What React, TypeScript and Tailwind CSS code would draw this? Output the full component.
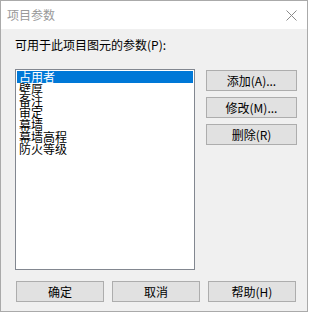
import React from 'react'

const font = { fontFamily: '"Noto Sans CJK SC", "Liberation Sans", sans-serif' }

const Button: React.FC<{ label: string; className?: string }> = ({ label, className }) => (
  <button
    className={`h-[21px] border border-[#adadad] bg-[#e1e1e1] text-[12px] leading-none text-black flex items-center justify-center ${className ?? ''}`}
  >
    {label}
  </button>
)

const App: React.FC = () => {
  const params = ['占用者', '壁厚', '备注', '审定', '幕墙', '幕墙高程', '防火等级']

  return (
    <div className="w-[312px] h-[314px] bg-white" style={font}>
      <div className="w-[308px] h-[312px] border border-[#aaaaaa] bg-[#f0f0f0] flex flex-col">
        <div className="h-[28px] bg-white flex items-center justify-between pl-[6px] pr-[10px]">
          <span className="text-[12px] text-[#999999]">项目参数</span>
          <svg width="11" height="11" viewBox="0 0 11 11">
            <path d="M0.5 0.5 L10.5 10.5 M10.5 0.5 L0.5 10.5" stroke="#8a8a8a" strokeWidth="1" fill="none" />
          </svg>
        </div>

        <div className="flex-1 pl-[14px]">
          <p className="mt-[8px] h-[16px] text-[12px] leading-[16px] text-black">可用于此项目图元的参数(P):</p>

          <div className="flex mt-[16px]">
            <div className="w-[180px] h-[201px] border border-[#828790] bg-white p-[1px]">
              {params.map((p, i) => (
                <div
                  key={p}
                  className={`h-[12px] pl-[2px] text-[12px] leading-[12px] ${i === 0 ? 'bg-[#0078d7] text-white' : 'text-black'}`}
                >
                  {p}
                </div>
              ))}
            </div>
            <div className="ml-[11px] mt-[1px] flex flex-col gap-[6px]">
              <Button label="添加(A)..." className="w-[91px]" />
              <Button label="修改(M)..." className="w-[91px]" />
              <Button label="删除(R)" className="w-[91px]" />
            </div>
          </div>

          <div className="flex gap-[8px] mt-[11px] ml-[1px]">
            <Button label="确定" className="w-[88px]" />
            <Button label="取消" className="w-[88px]" />
            <Button label="帮助(H)" className="w-[88px]" />
          </div>
        </div>
      </div>
    </div>
  )
}

export default App
